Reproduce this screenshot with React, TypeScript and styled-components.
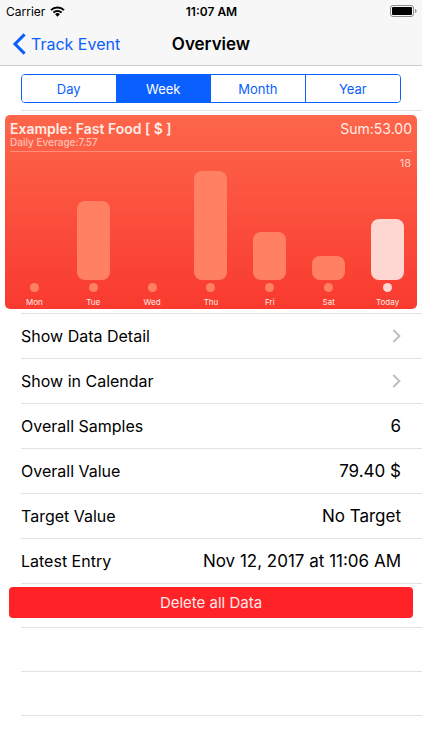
import React, { useState } from "react";
import styled, { createGlobalStyle } from "styled-components";

const GlobalStyle = createGlobalStyle`
  * { box-sizing: border-box; }
  body {
    margin: 0;
    background: #ffffff;
    color: #000000;
    font-family: Inter, "Liberation Sans", sans-serif;
  }
  button { font-family: inherit; }
`;

const separator = "#e2e2e4";
const blue = "#0a60ff";

const Screen = styled.div`
  min-height: 100vh;
  overflow: hidden;
`;

const TopBar = styled.header`
  background: #f7f7f7;
  border-bottom: 1px solid #cdcdd2;
`;

const StatusBar = styled.div`
  display: grid;
  grid-template-columns: 1fr auto 1fr;
  align-items: center;
  height: 22px;
  padding: 0 5px 0 6px;
  font-size: 12px;
`;

const Carrier = styled.span`
  display: flex;
  align-items: center;
  gap: 5px;
`;

const Clock = styled.time`
  font-weight: 600;
`;

const Battery = styled.svg`
  justify-self: end;
`;

const NavBar = styled.nav`
  display: grid;
  grid-template-columns: 1fr auto 1fr;
  align-items: center;
  height: 43px;
  padding: 0 12px;
`;

const BackLink = styled.a`
  display: flex;
  align-items: center;
  gap: 5px;
  color: ${blue};
  font-size: 16px;
  text-decoration: none;
  white-space: nowrap;
`;

const Title = styled.h1`
  margin: 0;
  font-size: 17px;
  font-weight: 600;
`;

const SegmentCell = styled.div`
  padding: 8px 21px 7px;
`;

const Segments = styled.div`
  display: grid;
  grid-template-columns: repeat(4, 1fr);
  height: 29px;
  border: 1px solid ${blue};
  border-radius: 4px;
  overflow: hidden;
`;

const Segment = styled.button<{ $active: boolean }>`
  border: 0;
  padding: 0;
  background: ${(p) => (p.$active ? blue : "#ffffff")};
  color: ${(p) => (p.$active ? "#ffffff" : blue)};
  font-size: 13px;
  cursor: pointer;
  &:not(:last-child) { border-right: 1px solid ${blue}; }
`;

const ChartCell = styled.section`
  margin-left: 21px;
  border-top: 1px solid ${separator};
  border-bottom: 1px solid ${separator};
  padding: 4px 0;
`;

const Card = styled.div`
  margin: 0 5px 0 -16px;
  border-radius: 5px;
  background: linear-gradient(#fd664b, #f93a2f);
  color: #ffece6;
`;

const CardHeader = styled.div`
  display: flex;
  justify-content: space-between;
  margin: 0 5px;
  padding: 6px 0 3px;
  border-bottom: 1px solid #ff8e78;
`;

const CardTitle = styled.h2`
  margin: 0;
  font-size: 14px;
  line-height: 16px;
  font-weight: 600;
`;

const Average = styled.p`
  margin: 0;
  color: #ffc0b3;
  font-size: 10px;
  line-height: 11px;
  font-weight: 500;
`;

const Sum = styled.span`
  font-size: 14px;
  line-height: 16px;
`;

const Scale = styled.div`
  height: 19px;
  padding: 4px 6px 0;
  color: #ffd0c6;
  font-size: 11px;
  line-height: 14px;
  text-align: right;
`;

const Bars = styled.div`
  display: grid;
  grid-template-columns: repeat(7, 1fr);
`;

const Day = styled.div`
  display: flex;
  flex-direction: column;
  align-items: center;
`;

const BarTrack = styled.div`
  display: flex;
  align-items: flex-end;
  width: 33px;
  height: 109px;
`;

const Bar = styled.div<{ $today: boolean }>`
  width: 100%;
  border-radius: 8px;
  background: ${(p) => (p.$today ? "#fed7d2" : "#ff8063")};
`;

const Dot = styled.span<{ $today: boolean }>`
  width: 9px;
  height: 9px;
  margin-top: 3px;
  border-radius: 50%;
  background: ${(p) => (p.$today ? "#fed7d2" : "#ff8063")};
`;

const DayName = styled.span`
  padding: 5px 0 2px;
  font-size: 8px;
  line-height: 10px;
`;

const List = styled.div`
  margin-left: 21px;
`;

const Row = styled.div`
  display: flex;
  align-items: center;
  justify-content: space-between;
  height: 45px;
  padding-right: 21px;
  border-bottom: 1px solid ${separator};
  font-size: 16px;
`;

const LinkRow = styled(Row)`
  color: inherit;
  text-decoration: none;
`;

const Value = styled.span`
  font-size: 17px;
`;

const ButtonRow = styled.div`
  height: 44px;
  padding: 3px 9px 0 0;
  border-bottom: 1px solid ${separator};
`;

const DeleteButton = styled.button`
  display: block;
  width: calc(100% + 12px);
  height: 31px;
  margin-left: -12px;
  border: 0;
  border-radius: 4px;
  background: #ff2226;
  color: #ffe9e9;
  font-size: 15px;
  cursor: pointer;
`;

const BlankRow = styled.div`
  height: 44px;
  border-bottom: 1px solid ${separator};
`;

const days = [
  { name: "Mon", value: 0 },
  { name: "Tue", value: 13 },
  { name: "Wed", value: 0 },
  { name: "Thu", value: 18 },
  { name: "Fri", value: 8 },
  { name: "Sat", value: 4 },
  { name: "Today", value: 10 },
];
const peak = 18;

const facts = [
  ["Overall Samples", "6"],
  ["Overall Value", "79.40 $"],
  ["Target Value", "No Target"],
  ["Latest Entry", "Nov 12, 2017 at 11:06 AM"],
];

const Wifi = () => (
  <svg width="15" height="11" viewBox="0 0 15 11" aria-hidden="true">
    <g fill="none" stroke="#000" strokeWidth="2">
      <path d="M1 4.1a9.2 9.2 0 0 1 13 0" />
      <path d="M3.4 6.6a5.8 5.8 0 0 1 8.2 0" />
    </g>
    <path d="M7.5 10.7 5.1 8.3a3.4 3.4 0 0 1 4.8 0z" />
  </svg>
);

const Chevron = () => (
  <svg width="9" height="14" viewBox="0 0 9 14" aria-hidden="true">
    <path d="M1.3 1 7.4 7l-6.1 6" fill="none" stroke="#bebec3" strokeWidth="2" />
  </svg>
);

export default function App() {
  const [period, setPeriod] = useState("Week");
  return (
    <Screen>
      <GlobalStyle />
      <TopBar>
        <StatusBar>
          <Carrier>Carrier <Wifi /></Carrier>
          <Clock>11:07 AM</Clock>
          <Battery width="27" height="12" viewBox="0 0 27 12" role="img" aria-label="Battery full">
            <rect x="0.5" y="0.5" width="23" height="11" rx="2.5" fill="none" stroke="#8c8c8c" />
            <rect x="2" y="2" width="20" height="8" rx="1" />
            <path d="M25 4v4c1-.3 1.6-1 1.6-2S26 4.300 25 4z" fill="#8c8c8c" />
          </Battery>
        </StatusBar>
        <NavBar>
          <BackLink href="#track-event">
            <svg width="14" height="22" viewBox="0 0 14 22" aria-hidden="true">
              <path d="M12.600 1.400 3 11l9.600 9.600" fill="none" stroke={blue} strokeWidth="3" />
            </svg>
            Track Event
          </BackLink>
          <Title>Overview</Title>
        </NavBar>
      </TopBar>
      <main>
        <SegmentCell>
          <Segments role="group" aria-label="Period">
            {["Day", "Week", "Month", "Year"].map((name) => (
              <Segment
                key={name}
                type="button"
                $active={name === period}
                aria-pressed={name === period}
                onClick={() => setPeriod(name)}
              >
                {name}
              </Segment>
            ))}
          </Segments>
        </SegmentCell>
        <ChartCell>
          <Card>
            <CardHeader>
              <div>
                <CardTitle>Example: Fast Food [ $ ]</CardTitle>
                <Average>Daily Everage:7.57</Average>
              </div>
              <Sum>Sum:53.00</Sum>
            </CardHeader>
            <Scale>{peak}</Scale>
            <Bars>
              {days.map(({ name, value }) => (
                <Day key={name}>
                  <BarTrack>
                    <Bar $today={name === "Today"} style={{ height: `${(value / peak) * 100}%` }} />
                  </BarTrack>
                  <Dot $today={name === "Today"} />
                  <DayName>{name}</DayName>
                </Day>
              ))}
            </Bars>
          </Card>
        </ChartCell>
        <List>
          <LinkRow as="a" href="#data-detail">Show Data Detail <Chevron /></LinkRow>
          <LinkRow as="a" href="#calendar">Show in Calendar <Chevron /></LinkRow>
          {facts.map(([label, value]) => (
            <Row key={label}>
              <span>{label}</span>
              <Value>{value}</Value>
            </Row>
          ))}
          <ButtonRow>
            <DeleteButton type="button">Delete all Data</DeleteButton>
          </ButtonRow>
          <BlankRow />
          <BlankRow />
        </List>
      </main>
    </Screen>
  );
}
